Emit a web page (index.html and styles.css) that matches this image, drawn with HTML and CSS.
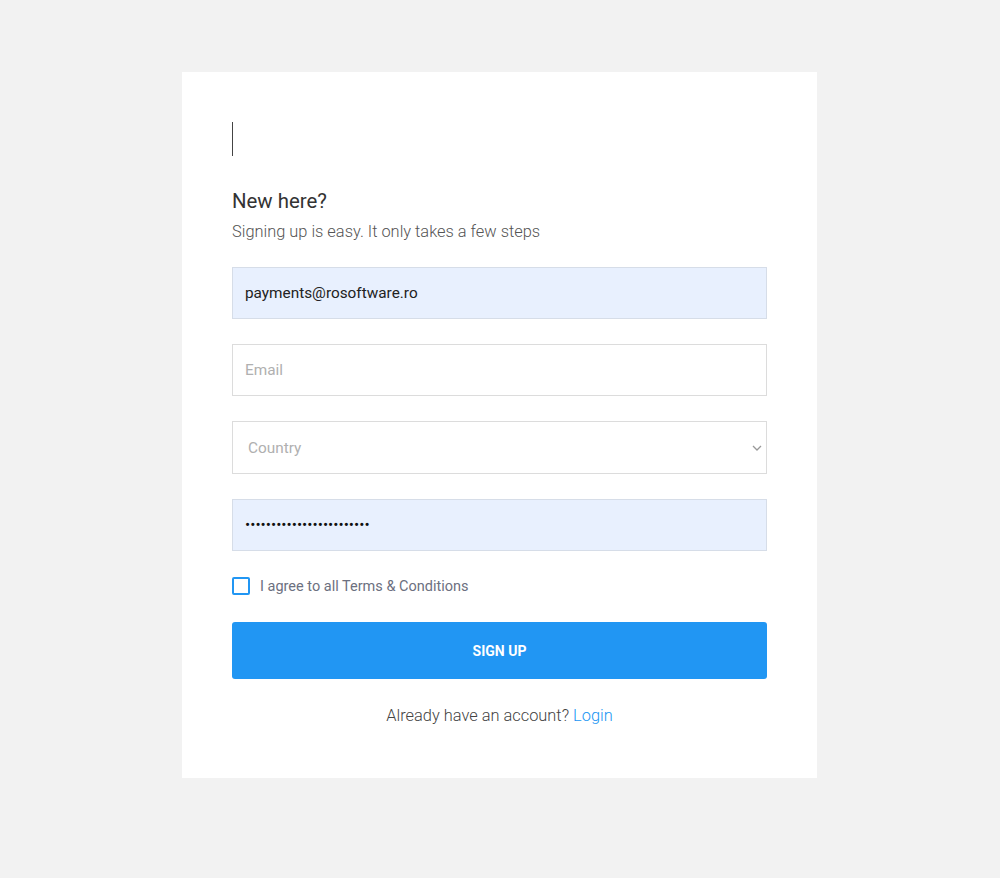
FILE: index.html
```html
<!DOCTYPE html>
<html>
<head>
<meta charset="utf-8">
<link rel="stylesheet" href="styles.css">
</head>
<body>
<div class="page">
  <div class="card">
    <div class="logo"><span class="caret"></span></div>
    <h4 class="title">New here?</h4>
    <p class="subtitle">Signing up is easy. It only takes a few steps</p>
    <form class="form">
      <input class="field filled" type="text" value="payments@rosoftware.ro">
      <input class="field" type="text" placeholder="Email">
      <div class="select-wrap">
        <select class="field select"><option>Country</option></select>
        <svg class="chev" width="10" height="6" viewBox="0 0 10 6"><path d="M1 1l4 4 4-4" fill="none" stroke="#999" stroke-width="1.3"/></svg>
      </div>
      <input class="field filled pw" type="password" value="aaaaaaaaaaaaaaaaaaaaaaaa">
      <label class="check">
        <span class="box"></span>
        <span class="check-text">I agree to all Terms &amp; Conditions</span>
      </label>
      <button class="btn" type="button">SIGN UP</button>
      <p class="login">Already have an account? <a class="login-link">Login</a></p>
    </form>
  </div>
</div>
</body>
</html>
```

FILE: styles.css
```css
html, body {
  margin: 0;
  padding: 0;
  background: #f2f2f2;
  font-family: Roboto, "Liberation Sans", sans-serif;
}
.page {
  width: 1000px;
  height: 878px;
  padding-top: 72px;
  box-sizing: border-box;
}
.card {
  width: 635px;
  margin-left: 182px;
  background: #fff;
  box-sizing: border-box;
  padding: 50px 50px 52px 50px;
}
.logo {
  height: 34px;
}
.caret {
  display: block;
  width: 1px;
  height: 34px;
  background: #444;
}
.title {
  margin: 33px 0 0 0;
  font-size: 20.4px;
  line-height: 24px;
  font-weight: 400;
  color: #333;
}
.subtitle {
  margin: 9px 0 0 0;
  font-size: 16.4px;
  line-height: 20px;
  font-weight: 300;
  color: #555;
}
.form {
  margin-top: 25px;
  display: flex;
  flex-direction: column;
}
.field {
  display: block;
  width: 535px;
  height: 52px;
  box-sizing: border-box;
  border: 1px solid #dcdcdc;
  background: #fff;
  padding: 0 12px;
  font-family: Roboto, "Liberation Sans", sans-serif;
  font-size: 15.35px;
  color: #222;
  outline: none;
  margin: 0 0 25px 0;
  border-radius: 0;
}
.field::placeholder {
  color: #b0b0b0;
}
.filled {
  background: #e8f0fe;
  border-color: #d6dde8;
}
.pw {
  font-size: 15.4px;
  color: #111;
  margin-bottom: 26px;
}
.select-wrap {
  position: relative;
  margin-bottom: 25px;
}
.select {
  -webkit-appearance: none;
  appearance: none;
  height: 53px;
  color: #b0b0b0;
  padding-left: 15px;
  margin: 0;
}
.chev {
  position: absolute;
  right: 5px;
  top: 24px;
}
.check {
  display: flex;
  align-items: center;
  height: 18px;
  margin-bottom: 27px;
}
.box {
  width: 18px;
  height: 18px;
  box-sizing: border-box;
  border: 2px solid #2196f3;
  border-radius: 2px;
}
.check-text {
  margin-left: 10px;
  font-size: 14.5px;
  color: #6c7080;
}
.btn {
  height: 57px;
  width: 535px;
  border: none;
  border-radius: 3px;
  background: #2196f3;
  color: #fff;
  font-family: Roboto, "Liberation Sans", sans-serif;
  font-weight: 700;
  font-size: 14px;
}
.login {
  margin: 27px 0 0 0;
  text-align: center;
  font-size: 16.4px;
  line-height: 20px;
  font-weight: 300;
  color: #444;
}
.login-link {
  color: #2196f3;
}
```
